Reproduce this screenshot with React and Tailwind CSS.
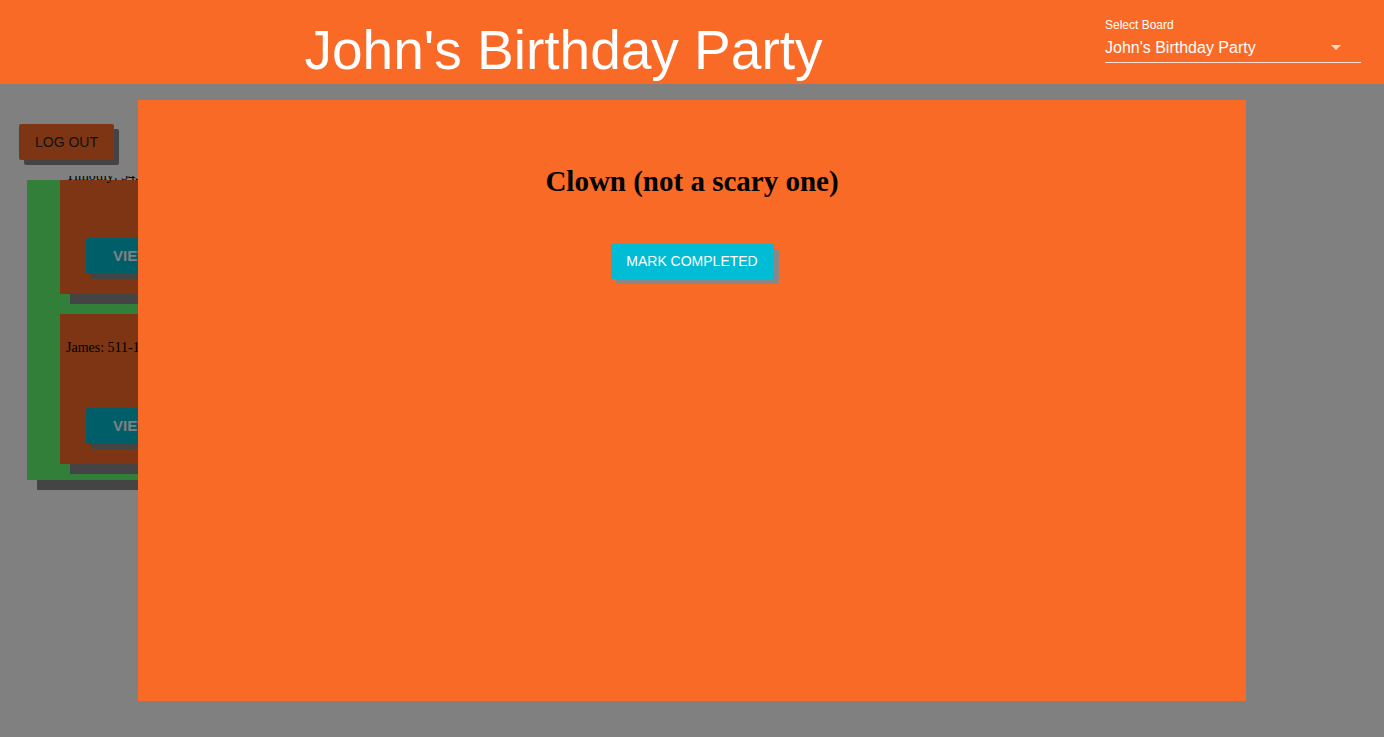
import React from "react"

const sans = { fontFamily: '"Liberation Sans", Arial, sans-serif' }
const serif = { fontFamily: '"Liberation Serif", "Times New Roman", serif' }

function ContactCard({ text, first }) {
  return (
    <div className={`w-[320px] bg-[#7d3513] shadow-[10px_10px_0_#444444] pl-[6px] pb-[20px] ${first ? "" : "pt-[26px]"}`}>
      <p className={`text-[14px] leading-[16px] text-black whitespace-nowrap ${first ? "-mt-[12px]" : ""}`} style={serif}>
        {text}
      </p>
      <button
        className={`ml-[20px] h-[36px] px-[27px] bg-[#005e69] text-[#808080] text-[15px] font-bold shadow-[5px_5px_0_#444444] rounded-[2px] ${first ? "mt-[54px]" : "mt-[52px]"}`}
        style={sans}
      >
        VIEW
      </button>
    </div>
  )
}

export default function App() {
  return (
    <div className="relative w-full h-[737px] overflow-hidden bg-[#808080]" style={sans}>
      {/* Header */}
      <header className="h-[84px] bg-[#f96a26] flex">
        <div className="flex-1 pl-[22px] text-center">
          <h1 className="mt-[23px] text-[55px] leading-[55px] text-white">John's Birthday Party</h1>
        </div>
        <div className="w-[256px] mr-[23px] pt-[18px]">
          <div className="text-[12px] leading-[14px] text-white">Select Board</div>
          <div className="relative mt-[6px] pb-[4px] border-b border-white/80">
            <div className="text-[16px] leading-[20px] text-white">John's Birthday Party</div>
            <span className="absolute right-[20px] top-[7px] w-0 h-0 border-l-[5px] border-r-[5px] border-t-[5px] border-l-transparent border-r-transparent border-t-white/75" />
          </div>
        </div>
      </header>

      {/* Page behind the dialog */}
      <div className="pl-[19px] pt-[40px]">
        <button className="h-[36px] w-[95px] bg-[#7d3513] text-[14px] text-[#111111] rounded-[2px] shadow-[5px_5px_0_#444444]">
          LOG OUT
        </button>
      </div>
      <div className="mt-[16px] pt-[4px] pb-[12px] pr-[12px] w-fit overflow-hidden">
        <div className="ml-[27px] w-[420px] bg-[#317f38] shadow-[10px_10px_0_#444444] pl-[33px] pb-[16px] flex flex-col gap-[20px]">
          <ContactCard first text="Timothy: 549-555-0142" />
          <ContactCard text="James: 511-102-3344" />
        </div>
      </div>

      {/* Dialog */}
      <div className="absolute left-[138px] top-[100px] w-[1108px] h-[601px] bg-[#f96a26] flex flex-col items-center">
        <h2 className="mt-[67px] text-[29px] leading-[29px] font-bold text-black" style={serif}>
          Clown (not a scary one)
        </h2>
        <button className="mt-[48px] h-[35px] w-[163px] bg-[#00bcd4] text-white text-[14px] shadow-[5px_5px_0_#888888] rounded-[2px]">
          MARK COMPLETED
        </button>
      </div>
    </div>
  )
}
